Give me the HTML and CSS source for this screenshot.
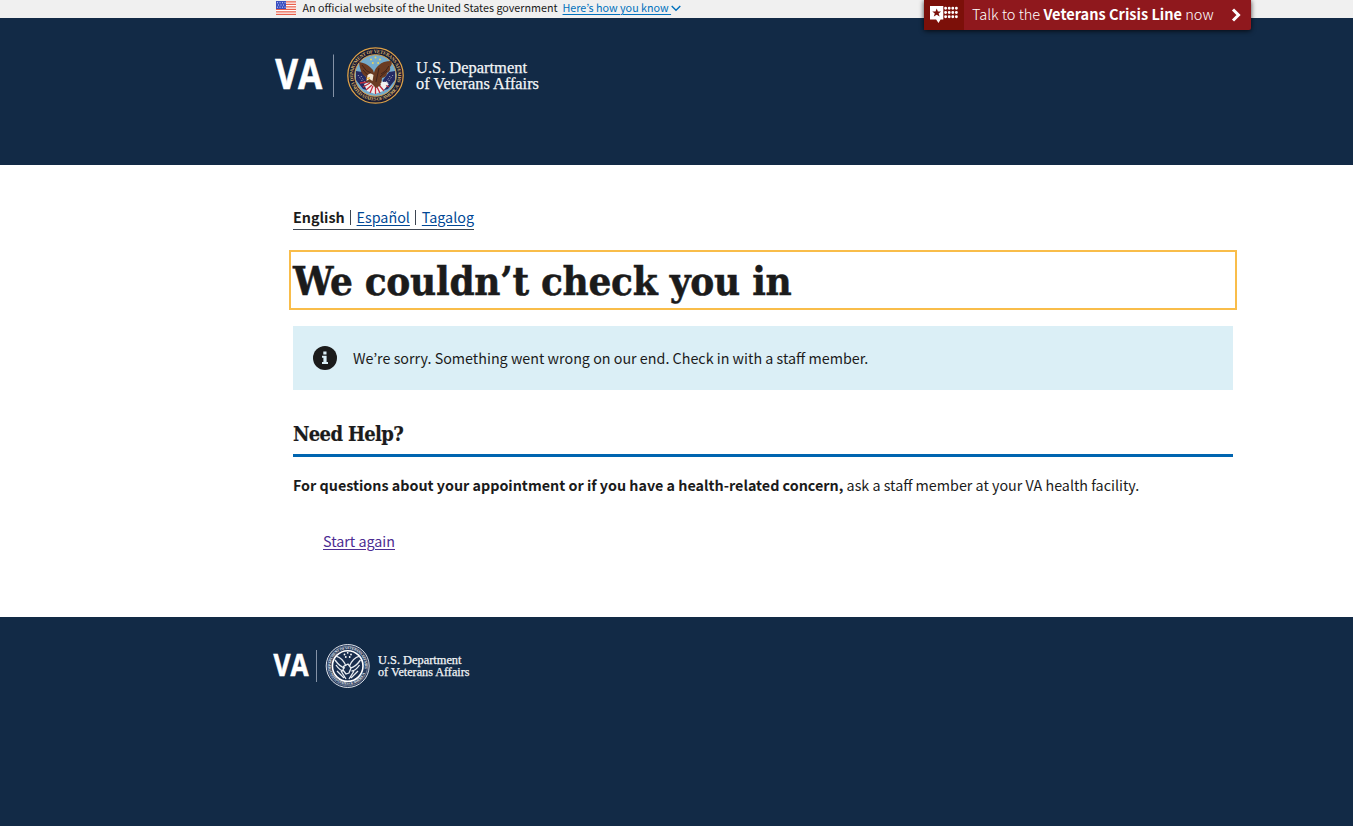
FILE: index.html
```html
<!DOCTYPE html>
<html lang="en">
<head>
<meta charset="utf-8">
<title>We couldn’t check you in</title>
<link rel="stylesheet" href="styles.css">
</head>
<body>
<div class="gov-banner">
  <svg class="flag" width="20" height="14" viewBox="0 0 20 14"><path fill="#fff" d="M0 0h20v14H0z"/><path stroke="#e8604c" stroke-width="1.25" d="M0 .9h20M0 3.4h20M0 5.9h20M0 8.4h20M0 10.9h20M0 13.4h20"/><path fill="#3a4fc0" d="M0 0h10v8H0z"/><path stroke="#c9d0f5" stroke-width="1" stroke-dasharray="1 1.5" d="M1 1.7h8.5M2 4h7M1 6.2h8.5"/></svg>
  <span class="gov-text">An official website of the United States government</span>
  <a class="gov-link" href="#">Here’s how you know&nbsp;</a>
  <svg class="chev" width="10" height="7" viewBox="0 0 10 7"><path d="M.7 1 5 5.3 9.300 1" fill="none" stroke="#0071bc" stroke-width="1.4"/></svg>
</div>
<header class="site-header">
  <svg class="logo" width="290" height="80" viewBox="265 36 290 80">
    <text class="va" x="275.300" y="89.300" font-size="41" textLength="47" lengthAdjust="spacingAndGlyphs">VA</text>
    <path stroke="#8492a6" d="M333.500 54.500v42.500"/>
    <circle cx="375.500" cy="75.500" r="28.500" fill="#171b35"/>
    <circle cx="375.500" cy="75.500" r="27.700" fill="none" stroke="#d9a24a" stroke-width="1.300"/>
    <circle cx="375.500" cy="75.500" r="20.800" fill="#74abcc" stroke="#d9a24a" stroke-width="1"/>
    <path id="sealTop" fill="none" d="M353.700 81a22.500 22.500 0 1 1 43.600 0"/>
    <path id="sealBottom" fill="none" d="M350.800 82a25.700 25.700 0 0 0 49.400 0"/>
    <text class="seal-text"><textPath href="#sealTop" textLength="83">DEPARTMENT OF VETERANS AFFAIRS</textPath></text>
    <text class="seal-text"><textPath href="#sealBottom" startOffset="1" textLength="61">UNITED STATES OF AMERICA</textPath></text>
    <g fill="#ead45c"><circle cx="375.500" cy="57.500" r="1"/><circle cx="371" cy="59.500" r="1"/><circle cx="380" cy="59.500" r="1"/><circle cx="372.800" cy="63" r="1"/><circle cx="378.200" cy="63" r="1"/></g>
    <path fill="#242a63" d="M356 71l6 1 6 8 2 11-7-2-7-9zM395 71l-6 1-6 8-2 11 7-2 7-9z"/>
    <path stroke="#ddd" stroke-width=".8" stroke-dasharray="1 2" d="M358 75l7 10M361 76l5 8M393 75l-7 10M390 76l-5 8"/>
    <path fill="#eee" d="M364 84l8-3 4 3 5-3 8 3-6 7-8 3-8-3z"/>
    <path stroke="#c12d3d" stroke-width="1.300" d="M363 87l7-4M366 90l6-5M370 93l3-7M375.500 94v-8M380 93l-3-6M384 91l-5-6M360 83l7-1M389 87l-6-3"/>
    <path fill="#6b3b22" d="M359 62q7 1 11 5 3 2 4 6 1-5 5-8 4-4 12-4 2 3-1 6 1 4-3 6 0 4-5 5l-1 7-5 3-5-5-5-1v-5q-6-3-7-15z"/>
    <path stroke="#3a211b" fill="none" stroke-width=".9" d="M362 65q4 7 9 8M363 70q3 5 8 6M389 66q-3 6-8 8M387 71l-7 6M379 68l-3 14"/>
    <path fill="#f3ead9" d="M367.500 75q3-3 6 0l-1 6-3-2-3 2z"/><path fill="#e7b445" d="M366 78l4-1-1 3z"/>
    <path fill="#f2f2f2" d="M380 84q4-4 8-1l-3 4z"/>
    <text class="logo-text" x="416" y="73" font-size="17" textLength="111" lengthAdjust="spacingAndGlyphs">U.S. Department</text>
    <text class="logo-text" x="416" y="89.300" font-size="17" textLength="123" lengthAdjust="spacingAndGlyphs">of Veterans Affairs</text>
  </svg>
</header>
<a class="crisis" href="#">
  <span class="crisis-icon"><svg width="30" height="20" viewBox="0 0 30 20"><path fill="#fff" d="M1 1h13.300v13.500h-2.700L9.500 18l-2.400-3.500H1z"/><path fill="#7c1009" d="M7.700 3.500l1.200 3h3.200L9.600 8.500l1 3.100-2.900-1.900-2.900 1.900 1-3.100-2.500-2h3.200z"/><g stroke="#fff" stroke-width="2.900" stroke-linecap="round" stroke-dasharray="0 3.600"><path d="M16.600 3.200h11.400M16.600 7.500h11.400M16.600 11.800h11.400"/></g></svg></span>
  <span class="crisis-text">Talk to the <b>Veterans Crisis Line</b> now</span>
  <svg class="crisis-arrow" width="10" height="14" viewBox="0 0 10 14"><path d="M2 1.500 7.500 7 2 12.500" fill="none" stroke="#fff" stroke-width="3"/></svg>
</a>
<main class="content">
  <div class="languages"><b>English</b><i class="bar"></i><a href="#">Español</a><i class="bar"></i><a href="#">Tagalog</a></div>
  <h1 class="title">We couldn’t check you in</h1>
  <div class="alert">
    <svg width="24" height="24" viewBox="0 0 24 24"><circle cx="12" cy="12" r="12" fill="#1b1b1b"/><path fill="#dbeff6" d="M10.300 5.500h3.200v2.900h-3.200zM9 9.800h4.600v6.100H15v2H9v-2h1.400v-4.100H9z"/></svg>
    <span class="alert-text">We’re sorry. Something went wrong on our end. Check in with a staff member.</span>
  </div>
  <h2 class="subtitle">Need Help?</h2>
  <p class="help"><b>For questions about your appointment or if you have a health-related concern,</b> <span>ask a staff member at your VA health facility.</span></p>
  <a class="restart" href="#">Start again</a>
</main>
<footer class="site-footer">
  <svg class="logo" width="220" height="62" viewBox="265 635 220 62">
    <text class="va" x="273.500" y="676.300" font-size="30" textLength="35" lengthAdjust="spacingAndGlyphs">VA</text>
    <path stroke="#8492a6" d="M316.500 650v32"/>
    <circle cx="347.700" cy="666" r="21.500" fill="#26395a" stroke="#dce1e8" stroke-width="1"/>
    <circle cx="347.700" cy="666" r="19.800" fill="none" stroke="#aab5c5" stroke-width=".5"/>
    <circle cx="347.700" cy="666" r="15.300" fill="#182d4d" stroke="#fff" stroke-width="1.600"/>
    <path id="sealTopSmall" fill="none" d="M331.300 670.500a17 17 0 1 1 32.800 0"/>
    <path id="sealBottomSmall" fill="none" d="M329.300 670.500a19 19 0 0 0 36.800 0"/>
    <text class="seal-text-small"><textPath href="#sealTopSmall" textLength="60">DEPARTMENT OF VETERANS AFFAIRS</textPath></text>
    <text class="seal-text-small"><textPath href="#sealBottomSmall" startOffset="1" textLength="46">UNITED STATES OF AMERICA</textPath></text>
    <g fill="#fff"><circle cx="347.700" cy="652.800" r=".9"/><circle cx="344.500" cy="654.500" r=".9"/><circle cx="351" cy="654.500" r=".9"/><circle cx="345.800" cy="657" r=".9"/><circle cx="349.700" cy="657" r=".9"/></g>
    <g fill="none" stroke="#e8ecf1" stroke-width="1.300"><path d="M336 656q7 2 10 10M335 660q5 7 10 8M336 665q4 6 8 6M359.500 656q-7 2-10 10M360.500 660q-5 7-10 8M359.500 665q-4 6-8 6M337 671l7 7M341 671l5 8M358 671l-7 7M354 671l-5 8M344 666l4-2 3 4-2 5-3 1-3-4z"/></g>
    <text class="logo-text" x="378" y="664" font-size="12.500" textLength="83.500" lengthAdjust="spacingAndGlyphs">U.S. Department</text>
    <text class="logo-text" x="378" y="676" font-size="12.500" textLength="91.500" lengthAdjust="spacingAndGlyphs">of Veterans Affairs</text>
  </svg>
</footer>
</body>
</html>
```
FILE: styles.css
```css
* { box-sizing: border-box; }
body {
  margin: 0;
  position: relative;
  background: #fff;
  color: #1b1b1b;
  font-family: "Noto Sans CJK JP", "Open Sans", sans-serif;
  font-size: 14.32px;
  line-height: 24px;
}
a { color: #004795; text-underline-offset: 2px; }
svg { display: block; flex: none; }
.gov-banner {
  height: 18px;
  padding-left: 276px;
  display: flex;
  align-items: flex-start;
  background: #f0f0f0;
  font-size: 10.75px;
  line-height: 16px;
  white-space: nowrap;
}
.flag { margin: 1px 6.500px 0 0; }
.gov-link { margin-left: 5px; color: #0071bc; }
.chev { margin-top: 5px; }
.site-header {
  height: 147px;
  padding: 18px 0 0 265px;
  background: #122a46;
}
.va { fill: #fff; font-family: "Open Sans", sans-serif; font-weight: 700; stroke: #fff; stroke-width: .6px; }
.logo-text { fill: #f4f6f8; font-family: "Liberation Serif", serif; stroke: #f4f6f8; stroke-width: .25px; }
.seal-text { fill: #d9b066; font: bold 4.800px "Liberation Serif", serif; }
.seal-text-small { fill: #e5e9ee; font: bold 3.600px "Liberation Serif", serif; }
.crisis {
  position: absolute;
  top: 0;
  left: 924px;
  width: 327px;
  height: 30px;
  display: flex;
  align-items: center;
  background: #8f181d;
  color: #fff;
  border-radius: 0 0 2px 2px;
  box-shadow: 0 1px 5px rgba(0, 0, 0, .75);
  text-decoration: none;
  white-space: nowrap;
}
.crisis-icon {
  width: 40px;
  height: 30px;
  padding: 5px 0 0 5px;
  background: #7c1009;
}
.crisis-text {
  width: 267px;
  padding: 0 0 2px 8px;
  font-size: 14.550px;
  font-weight: 300;
}
.crisis-text b { font-weight: 700; }
.content {
  width: 940px;
  height: 452px;
  margin-left: 293px;
  padding-top: 41px;
}
.languages {
  width: 181px;
  height: 24px;
  padding-bottom: 2px;
  display: flex;
  align-items: center;
  border-bottom: 1px solid #3d4551;
  white-space: nowrap;
}
.bar { width: 1px; height: 15px; margin: 2px 5.500px 0; background: #3d4551; }
.title {
  height: 56px;
  margin: 22px -2px 0;
  padding-left: 2px;
  outline: 2px solid #f9bd4a;
  font: bold 40px/58px "DejaVu Serif Condensed", "DejaVu Serif", serif;
  letter-spacing: -.280px;
  white-space: nowrap;
  -webkit-text-stroke: .5px #1b1b1b;
}
.alert {
  height: 64px;
  margin-top: 18px;
  padding-left: 20px;
  display: flex;
  align-items: center;
  gap: 16px;
  background: #dbeff6;
  white-space: nowrap;
}
.subtitle {
  height: 40px;
  margin: 27px 0 0;
  border-bottom: 3px solid #0065b0;
  font: bold 20px/34px "DejaVu Serif Condensed", "DejaVu Serif", serif;
  letter-spacing: -.650px;
  -webkit-text-stroke: .2px #1b1b1b;
}
.help { margin: 16px 0 32px; white-space: nowrap; }
.restart { margin-left: 30px; color: #4c2c92; }
.site-footer {
  height: 209px;
  padding: 18px 0 0 265px;
  background: #122a46;
}
```
